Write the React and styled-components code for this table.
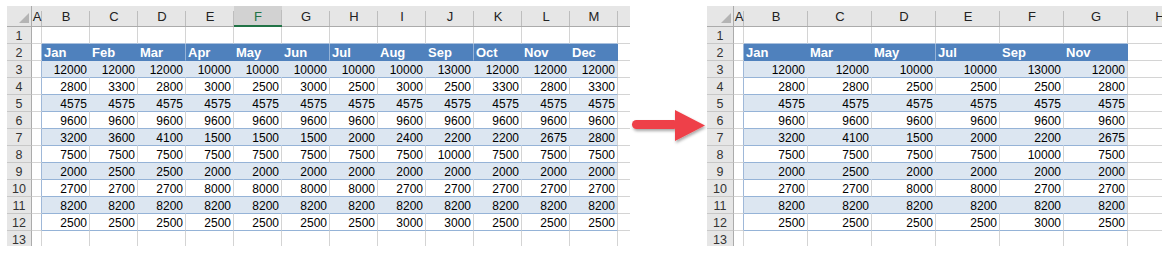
import React from "react";
import styled, { createGlobalStyle } from "styled-components";

const GlobalStyle = createGlobalStyle`
  html, body { margin: 0; padding: 0; background: #fff; }
  body { font-family: "Liberation Sans", Arial, sans-serif; }
`;

const MONTHS = ["Jan", "Feb", "Mar", "Apr", "May", "Jun", "Jul", "Aug", "Sep", "Oct", "Nov", "Dec"];

const DATA = [
  [12000, 12000, 12000, 10000, 10000, 10000, 10000, 10000, 13000, 12000, 12000, 12000],
  [2800, 3300, 2800, 3000, 2500, 3000, 2500, 3000, 2500, 3300, 2800, 3300],
  [4575, 4575, 4575, 4575, 4575, 4575, 4575, 4575, 4575, 4575, 4575, 4575],
  [9600, 9600, 9600, 9600, 9600, 9600, 9600, 9600, 9600, 9600, 9600, 9600],
  [3200, 3600, 4100, 1500, 1500, 1500, 2000, 2400, 2200, 2200, 2675, 2800],
  [7500, 7500, 7500, 7500, 7500, 7500, 7500, 7500, 10000, 7500, 7500, 7500],
  [2000, 2500, 2500, 2000, 2000, 2000, 2000, 2000, 2000, 2000, 2000, 2000],
  [2700, 2700, 2700, 8000, 8000, 8000, 8000, 2700, 2700, 2700, 2700, 2700],
  [8200, 8200, 8200, 8200, 8200, 8200, 8200, 8200, 8200, 8200, 8200, 8200],
  [2500, 2500, 2500, 2500, 2500, 2500, 2500, 3000, 3000, 2500, 2500, 2500],
];

const LETTERS = "BCDEFGHIJKLMN".split("");
const QUARTER_START = ["Apr", "Jul", "Oct"];

const Page = styled.div`
  display: flex;
  align-items: flex-start;
  width: 1162px;
  height: 254px;
  padding: 6px 0 0 7px;
  box-sizing: border-box;
  overflow: hidden;
`;

const Viewport = styled.div`
  flex: none;
  width: ${p => p.$width}px;
  height: 240px;
  overflow: hidden;
`;

const Grid = styled.div`
  display: grid;
  grid-template-columns: ${p => p.$cols};
  grid-template-rows: 21px repeat(13, 17px);
  width: max-content;
`;

const Corner = styled.div`
  box-sizing: border-box;
  display: flex;
  align-items: flex-end;
  justify-content: flex-end;
  padding: 0 2px 3px 0;
  background: #e6e6e6;
  border-right: 1px solid #ababab;
  border-bottom: 1px solid #ababab;
`;

const Triangle = styled.span`
  width: 0;
  height: 0;
  border-left: 10px solid transparent;
  border-bottom: 10px solid #b4b4b4;
`;

const ColHead = styled.div`
  box-sizing: border-box;
  display: flex;
  align-items: flex-end;
  justify-content: center;
  padding-bottom: ${p => (p.$selected ? 1 : 2)}px;
  font-size: 13px;
  color: ${p => (p.$selected ? "#217346" : "#222")};
  background: linear-gradient(#bdbdbd, #bdbdbd) no-repeat right bottom / 1px 15px,
    ${p => (p.$selected ? "#d2d2d2" : "#e6e6e6")};
  border-bottom: ${p => (p.$selected ? "2px solid #217346" : "1px solid #ababab")};
  white-space: nowrap;
`;

const RowHead = styled.div`
  box-sizing: border-box;
  display: flex;
  align-items: center;
  justify-content: center;
  padding-top: 1px;
  font-size: 12.5px;
  color: #333;
  background: #e6e6e6;
  border-right: 1px solid #ababab;
  border-bottom: 1px solid #c8c8c8;
`;

const PlainCell = styled.div`
  box-sizing: border-box;
  background: #fff;
  border-right: 1px solid ${p => (p.$tableEdge ? "#9fb8d8" : "#d4d4d4")};
  border-bottom: 1px solid ${p => (p.$tableTop ? "#a9c0dd" : "#d4d4d4")};
`;

const HeadCell = styled.div`
  box-sizing: border-box;
  display: flex;
  align-items: center;
  padding: 1px 0 0 2px;
  font-size: 13px;
  font-weight: bold;
  color: #fff;
  background: #4f81bd;
  border-right: 1px solid ${p => (p.$divider ? "#95b3d7" : "#4f81bd")};
  border-bottom: 1px solid #4f81bd;
  white-space: nowrap;
  overflow: hidden;
`;

const NumCell = styled.div`
  box-sizing: border-box;
  display: flex;
  align-items: center;
  justify-content: flex-end;
  padding: 1px 2px 0 0;
  font-size: 12px;
  color: #000;
  background: ${p => (p.$band ? "#dce6f1" : "#fff")};
  border-right: 1px solid ${p => (p.$band && !p.$last ? "#dce6f1" : "#d4d4d4")};
  border-bottom: 1px solid #95b3d7;
  white-space: nowrap;
`;

const ArrowBox = styled.div`
  flex: none;
  width: 77px;
  margin-top: 94px;
  line-height: 0;
`;

function Sheet({ width, headWidth, colWidth, months, rows, selected, showTail }) {
  const n = months.length;
  const cols = `${headWidth}px 10px repeat(${n + 1}, ${colWidth}px)`;
  const letters = LETTERS.slice(0, n + 1);
  const cells = [];

  cells.push(<Corner key="corner"><Triangle /></Corner>);
  cells.push(<ColHead key="hA">A</ColHead>);
  letters.forEach((l, i) => {
    const tail = i === n;
    cells.push(
      <ColHead key={"h" + l} $selected={l === selected}>
        {tail && !showTail ? "" : l}
      </ColHead>
    );
  });

  for (let r = 1; r <= 13; r++) {
    const inTable = r >= 2 && r <= 12;
    cells.push(<RowHead key={"r" + r}>{r}</RowHead>);
    cells.push(<PlainCell key={"a" + r} $tableEdge={inTable} />);
    for (let c = 0; c < n; c++) {
      const key = r + "-" + c;
      if (r === 2) {
        cells.push(
          <HeadCell key={key} $divider={QUARTER_START.includes(months[c + 1])}>
            {months[c]}
          </HeadCell>
        );
      } else if (inTable) {
        cells.push(
          <NumCell key={key} $band={r % 2 === 1} $last={c === n - 1}>
            {rows[r - 3][c]}
          </NumCell>
        );
      } else {
        cells.push(<PlainCell key={key} $tableTop={r === 1} />);
      }
    }
    cells.push(<PlainCell key={"t" + r} />);
  }

  return (
    <Viewport $width={width}>
      <Grid $cols={cols}>{cells}</Grid>
    </Viewport>
  );
}

const Arrow = () => (
  <svg width="77" height="60" viewBox="0 0 77 60">
    <defs>
      <filter id="shadow" x="-20%" y="-30%" width="140%" height="170%">
        <feDropShadow dx="1" dy="2" stdDeviation="1.5" floodColor="#000" floodOpacity="0.35" />
      </filter>
    </defs>
    <g filter="url(#shadow)" fill="#ee4048">
      <rect x="2" y="20" width="46" height="9" rx="4.5" />
      <polygon points="45,10 75,25.5 45,41" />
    </g>
  </svg>
);

const pick = [0, 2, 4, 6, 8, 10];

export default function App() {
  const rightMonths = pick.map(i => MONTHS[i]);
  const rightRows = DATA.map(row => pick.map(i => row[i]));
  return (
    <>
      <GlobalStyle />
      <Page>
        <Sheet
          width={623}
          headWidth={25}
          colWidth={48}
          months={MONTHS}
          rows={DATA}
          selected="F"
          showTail={false}
        />
        <ArrowBox>
          <Arrow />
        </ArrowBox>
        <Sheet
          width={460}
          headWidth={27}
          colWidth={64}
          months={rightMonths}
          rows={rightRows}
          showTail
        />
      </Page>
    </>
  );
}
